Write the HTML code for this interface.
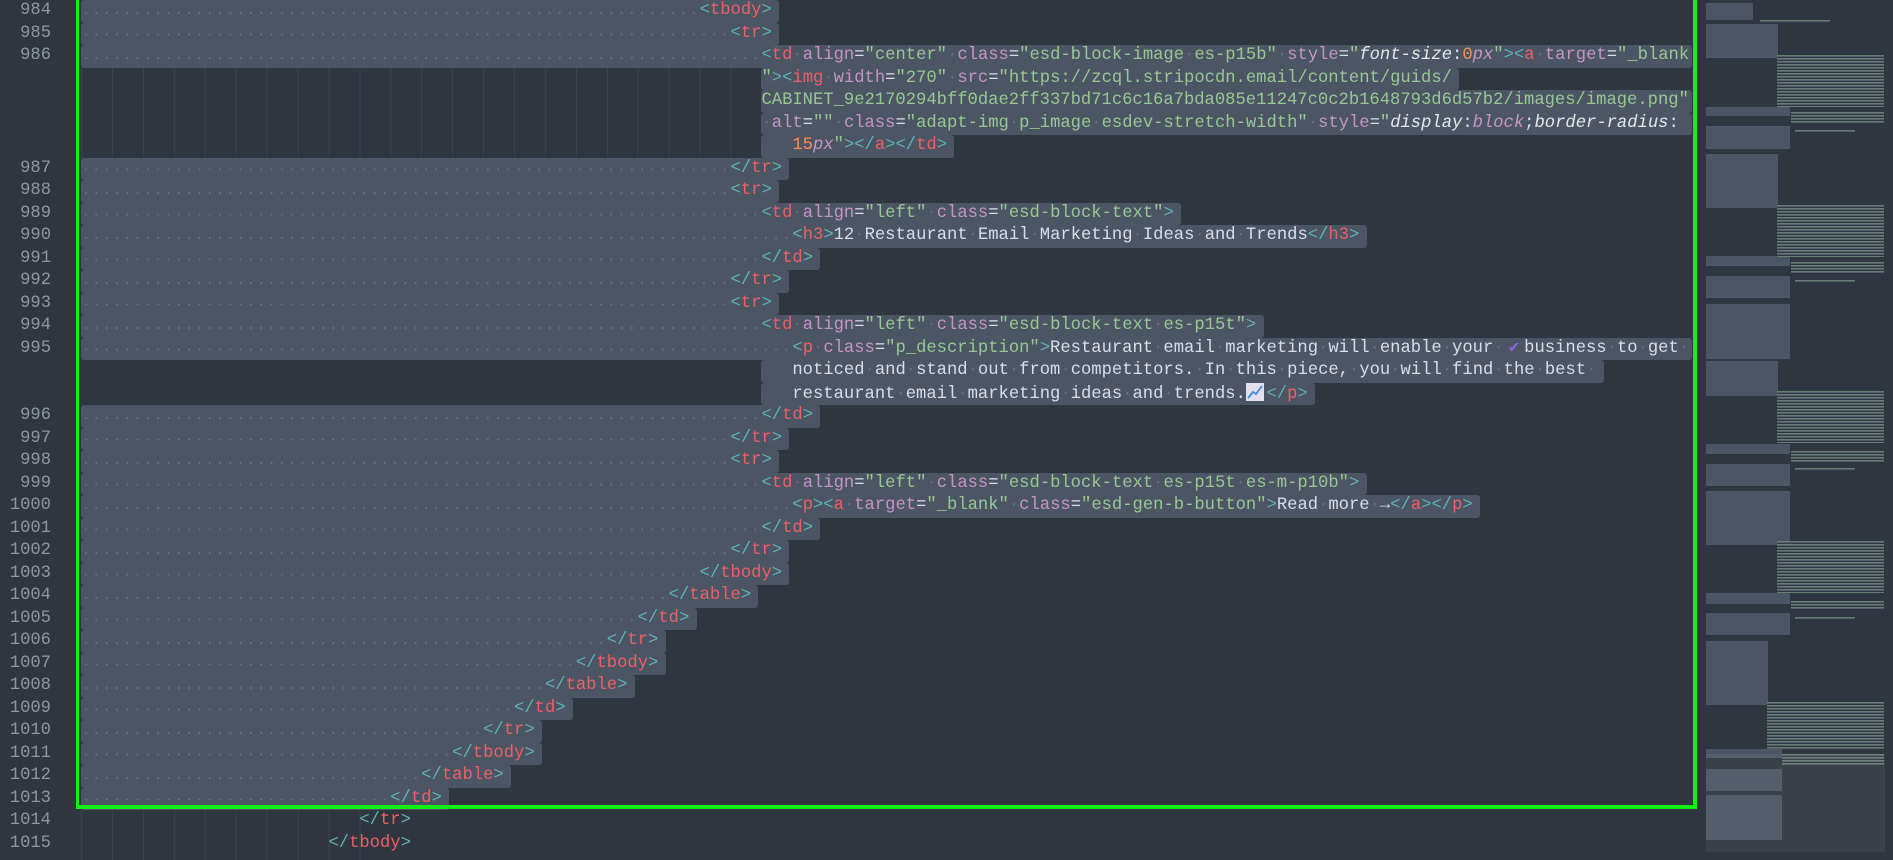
<!DOCTYPE html>
<html><head><meta charset="utf-8"><style>
html,body{margin:0;padding:0;}
body{width:1893px;height:857px;background:#2f3640;position:relative;overflow:hidden;font-family:"Liberation Mono","DejaVu Sans Mono",monospace;font-size:17.18px;}
#ed{position:absolute;left:0;top:3px;width:1700px;height:857px;}
.row{position:absolute;height:22.5px;line-height:22.5px;white-space:pre;color:#d8dee9;left:calc(81px + var(--c)*10.31px);}
.sel{position:absolute;height:22.5px;background:#4b5563;border-radius:3px;left:calc(81px + var(--s,0)*10.31px);width:calc((var(--e) + .7 - var(--s,0))*10.31px);}
.dots{position:absolute;height:22.5px;left:81px;width:calc(var(--c)*10.31px);background-image:radial-gradient(circle,#66707c 0.9px,transparent 1.3px);background-size:10.31px 22.5px;background-position:0 1px;}
.ln{position:absolute;left:0;width:51px;text-align:right;color:#8e96a0;height:22.5px;line-height:22.5px;}
.guide{position:absolute;left:81px;background-image:repeating-linear-gradient(90deg,#3a424e 0 1px,transparent 1px 30.93px);}
k{color:#5fb3b3}n{color:#ec5f67}r{color:#c594c5}g{color:#99c794}z{color:#646d79}o{color:#f99157}v{color:#c594c5;font-style:italic}y{color:#e6e9ee;font-style:italic}
.mm{position:absolute;}
.mg{background:#4b5563;}
.mt{background:repeating-linear-gradient(180deg,#6f8a78 0 1px,#5a6470 1px 2px,#2f3640 2px 3px);opacity:.85}
</style></head><body>
<div id="ed">
<div class="guide" style="top:64.5px;height:90px;width:680px"></div>
<div class="guide" style="top:807px;height:50px;width:280px"></div>

<div class="sel" style="top:-3px;--e:67"></div>
<div class="sel" style="top:19.5px;--e:67"></div>
<div class="sel" style="top:42px;--e:155.6"></div>
<div class="sel" style="top:64.5px;--s:66;--e:133"></div>
<div class="sel" style="top:87px;--s:66;--e:155.6"></div>
<div class="sel" style="top:109.5px;--s:66;--e:155.6"></div>
<div class="sel" style="top:132px;--s:66;--e:84"></div>
<div class="sel" style="top:154.5px;--e:68"></div>
<div class="sel" style="top:177px;--e:67"></div>
<div class="sel" style="top:199.5px;--e:106"></div>
<div class="sel" style="top:222px;--e:124"></div>
<div class="sel" style="top:244.5px;--e:71"></div>
<div class="sel" style="top:267px;--e:68"></div>
<div class="sel" style="top:289.5px;--e:67"></div>
<div class="sel" style="top:312px;--e:114"></div>
<div class="sel" style="top:334.5px;--e:155.6"></div>
<div class="sel" style="top:357px;--s:66;--e:147"></div>
<div class="sel" style="top:379.5px;--s:66;--e:119"></div>
<div class="sel" style="top:402px;--e:71"></div>
<div class="sel" style="top:424.5px;--e:68"></div>
<div class="sel" style="top:447px;--e:67"></div>
<div class="sel" style="top:469.5px;--e:124"></div>
<div class="sel" style="top:492px;--e:135"></div>
<div class="sel" style="top:514.5px;--e:71"></div>
<div class="sel" style="top:537px;--e:68"></div>
<div class="sel" style="top:559.5px;--e:68"></div>
<div class="sel" style="top:582px;--e:65"></div>
<div class="sel" style="top:604.5px;--e:59"></div>
<div class="sel" style="top:627px;--e:56"></div>
<div class="sel" style="top:649.5px;--e:56"></div>
<div class="sel" style="top:672px;--e:53"></div>
<div class="sel" style="top:694.5px;--e:47"></div>
<div class="sel" style="top:717px;--e:44"></div>
<div class="sel" style="top:739.5px;--e:44"></div>
<div class="sel" style="top:762px;--e:41"></div>
<div class="sel" style="top:784.5px;--e:35"></div>

<div class="dots" style="top:-3px;--c:60"></div>
<div class="dots" style="top:19.5px;--c:63"></div>
<div class="dots" style="top:42px;--c:66"></div>
<div class="dots" style="top:154.5px;--c:63"></div>
<div class="dots" style="top:177px;--c:63"></div>
<div class="dots" style="top:199.5px;--c:66"></div>
<div class="dots" style="top:222px;--c:69"></div>
<div class="dots" style="top:244.5px;--c:66"></div>
<div class="dots" style="top:267px;--c:63"></div>
<div class="dots" style="top:289.5px;--c:63"></div>
<div class="dots" style="top:312px;--c:66"></div>
<div class="dots" style="top:334.5px;--c:69"></div>
<div class="dots" style="top:402px;--c:66"></div>
<div class="dots" style="top:424.5px;--c:63"></div>
<div class="dots" style="top:447px;--c:63"></div>
<div class="dots" style="top:469.5px;--c:66"></div>
<div class="dots" style="top:492px;--c:69"></div>
<div class="dots" style="top:514.5px;--c:66"></div>
<div class="dots" style="top:537px;--c:63"></div>
<div class="dots" style="top:559.5px;--c:60"></div>
<div class="dots" style="top:582px;--c:57"></div>
<div class="dots" style="top:604.5px;--c:54"></div>
<div class="dots" style="top:627px;--c:51"></div>
<div class="dots" style="top:649.5px;--c:48"></div>
<div class="dots" style="top:672px;--c:45"></div>
<div class="dots" style="top:694.5px;--c:42"></div>
<div class="dots" style="top:717px;--c:39"></div>
<div class="dots" style="top:739.5px;--c:36"></div>
<div class="dots" style="top:762px;--c:33"></div>
<div class="dots" style="top:784.5px;--c:30"></div>

<div class="ln" style="top:-3px">984</div>
<div class="ln" style="top:19.5px">985</div>
<div class="ln" style="top:42px">986</div>
<div class="ln" style="top:154.5px">987</div>
<div class="ln" style="top:177px">988</div>
<div class="ln" style="top:199.5px">989</div>
<div class="ln" style="top:222px">990</div>
<div class="ln" style="top:244.5px">991</div>
<div class="ln" style="top:267px">992</div>
<div class="ln" style="top:289.5px">993</div>
<div class="ln" style="top:312px">994</div>
<div class="ln" style="top:334.5px">995</div>
<div class="ln" style="top:402px">996</div>
<div class="ln" style="top:424.5px">997</div>
<div class="ln" style="top:447px">998</div>
<div class="ln" style="top:469.5px">999</div>
<div class="ln" style="top:492px">1000</div>
<div class="ln" style="top:514.5px">1001</div>
<div class="ln" style="top:537px">1002</div>
<div class="ln" style="top:559.5px">1003</div>
<div class="ln" style="top:582px">1004</div>
<div class="ln" style="top:604.5px">1005</div>
<div class="ln" style="top:627px">1006</div>
<div class="ln" style="top:649.5px">1007</div>
<div class="ln" style="top:672px">1008</div>
<div class="ln" style="top:694.5px">1009</div>
<div class="ln" style="top:717px">1010</div>
<div class="ln" style="top:739.5px">1011</div>
<div class="ln" style="top:762px">1012</div>
<div class="ln" style="top:784.5px">1013</div>
<div class="ln" style="top:807px">1014</div>
<div class="ln" style="top:829.5px">1015</div>

<div class="row" style="top:-3px;--c:60"><k>&lt;</k><n>tbody</n><k>&gt;</k></div>
<div class="row" style="top:19.5px;--c:63"><k>&lt;</k><n>tr</n><k>&gt;</k></div>
<div class="row" style="top:42px;--c:66"><k>&lt;</k><n>td</n><z>·</z><r>align</r>=<g>"center"</g><z>·</z><r>class</r>=<g>"esd-block-image<z>·</z>es-p15b"</g><z>·</z><r>style</r>=<g>"</g><y>font-size</y>:<o>0</o><v>px</v><g>"</g><k>&gt;&lt;</k><n>a</n><z>·</z><r>target</r>=<g>"_blank</g></div>
<div class="row" style="top:64.5px;--c:66"><g>"</g><k>&gt;&lt;</k><n>img</n><z>·</z><r>width</r>=<g>"270"</g><z>·</z><r>src</r>=<g>"https://zcql.stripocdn.email/content/guids/</g></div>
<div class="row" style="top:87px;--c:66"><g>CABINET_9e2170294bff0dae2ff337bd71c6c16a7bda085e11247c0c2b1648793d6d57b2/images/image.png"</g></div>
<div class="row" style="top:109.5px;--c:66"><z>·</z><r>alt</r>=<g>""</g><z>·</z><r>class</r>=<g>"adapt-img<z>·</z>p_image<z>·</z>esdev-stretch-width"</g><z>·</z><r>style</r>=<g>"</g><y>display</y>:<v>block</v>;<y>border-radius</y>:</div>
<div class="row" style="top:132px;--c:69"><o>15</o><v>px</v><g>"</g><k>&gt;&lt;/</k><n>a</n><k>&gt;&lt;/</k><n>td</n><k>&gt;</k></div>
<div class="row" style="top:154.5px;--c:63"><k>&lt;/</k><n>tr</n><k>&gt;</k></div>
<div class="row" style="top:177px;--c:63"><k>&lt;</k><n>tr</n><k>&gt;</k></div>
<div class="row" style="top:199.5px;--c:66"><k>&lt;</k><n>td</n><z>·</z><r>align</r>=<g>"left"</g><z>·</z><r>class</r>=<g>"esd-block-text"</g><k>&gt;</k></div>
<div class="row" style="top:222px;--c:69"><k>&lt;</k><n>h3</n><k>&gt;</k>12<z>·</z>Restaurant<z>·</z>Email<z>·</z>Marketing<z>·</z>Ideas<z>·</z>and<z>·</z>Trends<k>&lt;/</k><n>h3</n><k>&gt;</k></div>
<div class="row" style="top:244.5px;--c:66"><k>&lt;/</k><n>td</n><k>&gt;</k></div>
<div class="row" style="top:267px;--c:63"><k>&lt;/</k><n>tr</n><k>&gt;</k></div>
<div class="row" style="top:289.5px;--c:63"><k>&lt;</k><n>tr</n><k>&gt;</k></div>
<div class="row" style="top:312px;--c:66"><k>&lt;</k><n>td</n><z>·</z><r>align</r>=<g>"left"</g><z>·</z><r>class</r>=<g>"esd-block-text<z>·</z>es-p15t"</g><k>&gt;</k></div>
<div class="row" style="top:334.5px;--c:69"><k>&lt;</k><n>p</n><z>·</z><r>class</r>=<g>"p_description"</g><k>&gt;</k>Restaurant<z>·</z>email<z>·</z>marketing<z>·</z>will<z>·</z>enable<z>·</z>your<z>·</z><span style="color:#8b63d8;display:inline-block;width:20.6px;text-align:center">✔</span>business<z>·</z>to<z>·</z>get<z>·</z></div>
<div class="row" style="top:357px;--c:69">noticed<z>·</z>and<z>·</z>stand<z>·</z>out<z>·</z>from<z>·</z>competitors.<z>·</z>In<z>·</z>this<z>·</z>piece,<z>·</z>you<z>·</z>will<z>·</z>find<z>·</z>the<z>·</z>best<z>·</z></div>
<div class="row" style="top:379.5px;--c:69">restaurant<z>·</z>email<z>·</z>marketing<z>·</z>ideas<z>·</z>and<z>·</z>trends.<span style="display:inline-block;width:18px;height:18px;vertical-align:-3px;margin-right:2.6px;background:#e4dfee"><svg width="18" height="18" viewBox="0 0 18 18"><path d="M2 15 L7 9 L10 11 L16 3" stroke="#3f8fd8" stroke-width="1.8" fill="none"/></svg></span><k>&lt;/</k><n>p</n><k>&gt;</k></div>
<div class="row" style="top:402px;--c:66"><k>&lt;/</k><n>td</n><k>&gt;</k></div>
<div class="row" style="top:424.5px;--c:63"><k>&lt;/</k><n>tr</n><k>&gt;</k></div>
<div class="row" style="top:447px;--c:63"><k>&lt;</k><n>tr</n><k>&gt;</k></div>
<div class="row" style="top:469.5px;--c:66"><k>&lt;</k><n>td</n><z>·</z><r>align</r>=<g>"left"</g><z>·</z><r>class</r>=<g>"esd-block-text<z>·</z>es-p15t<z>·</z>es-m-p10b"</g><k>&gt;</k></div>
<div class="row" style="top:492px;--c:69"><k>&lt;</k><n>p</n><k>&gt;&lt;</k><n>a</n><z>·</z><r>target</r>=<g>"_blank"</g><z>·</z><r>class</r>=<g>"esd-gen-b-button"</g><k>&gt;</k>Read<z>·</z>more<z>·</z>→<k>&lt;/</k><n>a</n><k>&gt;&lt;/</k><n>p</n><k>&gt;</k></div>
<div class="row" style="top:514.5px;--c:66"><k>&lt;/</k><n>td</n><k>&gt;</k></div>
<div class="row" style="top:537px;--c:63"><k>&lt;/</k><n>tr</n><k>&gt;</k></div>
<div class="row" style="top:559.5px;--c:60"><k>&lt;/</k><n>tbody</n><k>&gt;</k></div>
<div class="row" style="top:582px;--c:57"><k>&lt;/</k><n>table</n><k>&gt;</k></div>
<div class="row" style="top:604.5px;--c:54"><k>&lt;/</k><n>td</n><k>&gt;</k></div>
<div class="row" style="top:627px;--c:51"><k>&lt;/</k><n>tr</n><k>&gt;</k></div>
<div class="row" style="top:649.5px;--c:48"><k>&lt;/</k><n>tbody</n><k>&gt;</k></div>
<div class="row" style="top:672px;--c:45"><k>&lt;/</k><n>table</n><k>&gt;</k></div>
<div class="row" style="top:694.5px;--c:42"><k>&lt;/</k><n>td</n><k>&gt;</k></div>
<div class="row" style="top:717px;--c:39"><k>&lt;/</k><n>tr</n><k>&gt;</k></div>
<div class="row" style="top:739.5px;--c:36"><k>&lt;/</k><n>tbody</n><k>&gt;</k></div>
<div class="row" style="top:762px;--c:33"><k>&lt;/</k><n>table</n><k>&gt;</k></div>
<div class="row" style="top:784.5px;--c:30"><k>&lt;/</k><n>td</n><k>&gt;</k></div>
<div class="row" style="top:807px;--c:27"><k>&lt;/</k><n>tr</n><k>&gt;</k></div>
<div class="row" style="top:829.5px;--c:24"><k>&lt;/</k><n>tbody</n><k>&gt;</k></div>
</div>

<div style="position:absolute;left:76px;top:-10px;width:1614px;height:815px;border:4px solid #14f014;border-top:none;border-left-width:3px"></div>

<div class="mm mg" style="left:1706px;top:3px;width:47px;height:17px"></div>
<div class="mm mg" style="left:1706px;top:24px;width:72px;height:34px"></div>
<div class="mm mg" style="left:1706px;top:107px;width:84px;height:9px"></div>
<div class="mm mg" style="left:1706px;top:126px;width:84px;height:23px"></div>
<div class="mm mg" style="left:1706px;top:154px;width:72px;height:54px"></div>
<div class="mm mg" style="left:1706px;top:256px;width:84px;height:10px"></div>
<div class="mm mg" style="left:1706px;top:276px;width:84px;height:22px"></div>
<div class="mm mg" style="left:1706px;top:304px;width:84px;height:55px"></div>
<div class="mm mg" style="left:1706px;top:361px;width:72px;height:35px"></div>
<div class="mm mg" style="left:1706px;top:444px;width:84px;height:10px"></div>
<div class="mm mg" style="left:1706px;top:464px;width:84px;height:22px"></div>
<div class="mm mg" style="left:1706px;top:491px;width:84px;height:54px"></div>
<div class="mm mg" style="left:1706px;top:593px;width:84px;height:11px"></div>
<div class="mm mg" style="left:1706px;top:613px;width:84px;height:22px"></div>
<div class="mm mg" style="left:1706px;top:641px;width:62px;height:64px"></div>
<div class="mm mg" style="left:1706px;top:749px;width:76px;height:9px"></div>
<div class="mm mg" style="left:1706px;top:769px;width:76px;height:22px"></div>
<div class="mm mg" style="left:1706px;top:795px;width:76px;height:45px"></div>
<div class="mm mt" style="left:1777px;top:55px;width:107px;height:52px"></div>
<div class="mm mt" style="left:1791px;top:112px;width:93px;height:12px"></div>
<div class="mm mt" style="left:1777px;top:205px;width:107px;height:52px"></div>
<div class="mm mt" style="left:1791px;top:262px;width:93px;height:11px"></div>
<div class="mm mt" style="left:1777px;top:391px;width:107px;height:52px"></div>
<div class="mm mt" style="left:1791px;top:451px;width:93px;height:11px"></div>
<div class="mm mt" style="left:1777px;top:541px;width:107px;height:52px"></div>
<div class="mm mt" style="left:1791px;top:601px;width:93px;height:8px"></div>
<div class="mm mt" style="left:1767px;top:702px;width:117px;height:47px"></div>
<div class="mm mt" style="left:1782px;top:754px;width:102px;height:11px"></div>
<div class="mm mt" style="left:1760px;top:20px;width:70px;height:2px"></div>
<div class="mm mt" style="left:1795px;top:130px;width:60px;height:2px"></div>
<div class="mm mt" style="left:1795px;top:280px;width:60px;height:2px"></div>
<div class="mm mt" style="left:1795px;top:468px;width:60px;height:2px"></div>
<div class="mm mt" style="left:1795px;top:617px;width:60px;height:2px"></div>
<div class="mm" style="left:1706px;top:754px;width:179px;height:98px;background:rgba(255,255,255,.05)"></div>
</body></html>
